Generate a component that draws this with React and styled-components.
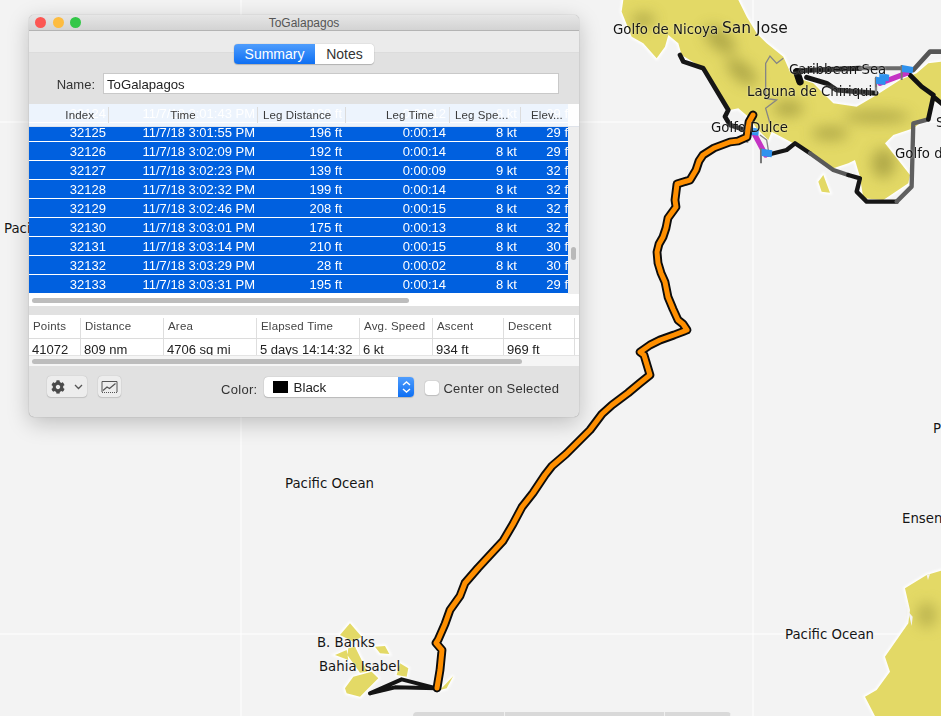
import React from 'react';
import styled, { createGlobalStyle } from 'styled-components';
import { FaCog } from 'react-icons/fa';

const GlobalStyle = createGlobalStyle`
    html, body {
        margin: 0;
        padding: 0;
        background: #f3f3f3;
    }
    * {
        box-sizing: border-box;
    }
`;

const Desktop = styled.div`
    position: relative;
    width: 941px;
    height: 716px;
    overflow: hidden;
    background: #f3f3f3;
    font-family: 'Liberation Sans', Arial, sans-serif;
`;

const MapCanvas = styled.svg`
    position: absolute;
    left: 0;
    top: 0;
`;

const MapLabel = styled.span`
    position: absolute;
    left: ${(p) => p.$x}px;
    top: ${(p) => p.$y}px;
    font-family: 'DejaVu Sans', sans-serif;
    font-size: ${(p) => p.$size || 13.3}px;
    line-height: 16px;
    white-space: nowrap;
    color: #151515;
    text-shadow: 0 0 2px rgba(255, 255, 255, 0.75);
`;

const BottomBar = styled.div`
    position: absolute;
    left: 413px;
    top: 712px;
    width: 318px;
    height: 4px;
    display: grid;
    grid-template-columns: 92px 160px 66px;
    border-radius: 5px 5px 0 0;
    overflow: hidden;
`;

const BottomBarPart = styled.div`
    background: #d9d9d9;
    border-right: 1px solid #f0f0f0;
`;

const Window = styled.div`
    position: absolute;
    left: 29px;
    top: 15px;
    width: 550px;
    height: 402px;
    display: flex;
    flex-direction: column;
    background: #e1e1e1;
    border-radius: 5px;
    overflow: hidden;
    box-shadow: 0 0 1px rgba(0, 0, 0, 0.45), 0 6px 22px rgba(0, 0, 0, 0.22);
`;

const TitleBar = styled.div`
    position: relative;
    flex: none;
    height: 16px;
    display: flex;
    align-items: center;
    justify-content: center;
    background: linear-gradient(#e6e6e6, #d3d3d3);
    border-bottom: 1px solid #b4b4b4;
    font-size: 12px;
    color: #555;
`;

const Lights = styled.div`
    position: absolute;
    left: 6px;
    top: 2px;
    display: flex;
    gap: 6.5px;
`;

const Light = styled.span`
    width: 11px;
    height: 11px;
    border-radius: 50%;
    background: ${(p) => p.$color};
`;

const TabStrip = styled.div`
    flex: none;
    height: 22px;
    background: #ebebeb;
    border-bottom: 1px solid #dcdcdc;
    display: flex;
    justify-content: center;
    padding-top: 13px;
    padding-left: 0;
`;

const Segments = styled.div`
    display: flex;
    width: 140px;
    height: 20px;
    border-radius: 4px;
    overflow: hidden;
    box-shadow: 0 0 1px rgba(0, 0, 0, 0.35), 0 1px 1px rgba(0, 0, 0, 0.18);
    position: relative;
    z-index: 1;
`;

const Segment = styled.div`
    width: ${(p) => p.$width}px;
    display: flex;
    align-items: center;
    justify-content: center;
    font-size: 14px;
    color: ${(p) => (p.$active ? '#fff' : '#333')};
    background: ${(p) => (p.$active ? 'linear-gradient(#4f9dfd, #0e6ff3)' : '#fff')};
`;

const NameRow = styled.div`
    flex: none;
    height: 51px;
    display: flex;
    align-items: flex-start;
    padding-top: 20px;
`;

const NameLabel = styled.label`
    width: 66px;
    line-height: 23px;
    text-align: right;
    font-size: 13px;
    color: #333;
`;

const NameField = styled.div`
    width: 456px;
    height: 21px;
    margin-left: 8px;
    padding-left: 3px;
    line-height: 21px;
    font-size: 13.2px;
    color: #222;
    background: #fff;
    border: 1px solid #c9c9c9;
`;

const TrackTable = styled.div`
    flex: none;
    height: 202px;
    display: flex;
    flex-direction: column;
    position: relative;
    background: #fff;
`;

const TrackBody = styled.div`
    flex: none;
    height: 190px;
    display: flex;
`;

const RowList = styled.div`
    width: 539px;
    overflow: hidden;
    background: #fff;
`;

const SideStrip = styled.div`
    position: relative;
    flex: 1;
    background: #eeeeee;
`;

const VerticalThumb = styled.div`
    position: absolute;
    left: 3px;
    top: 143px;
    width: 5px;
    height: 13px;
    border-radius: 3px;
    background: #b9b9b9;
`;

const columns = '80px 149px 88px 104px 71px 47px';

const Row = styled.div`
    display: grid;
    grid-template-columns: ${columns};
    height: 19px;
    padding-bottom: 1.5px;
    background-clip: content-box;
    background-color: #0060df;
    color: #fff;
    font-size: 13px;
    line-height: 20px;
    white-space: nowrap;
`;

const Cell = styled.div`
    height: 19px;
    text-align: right;
    padding-right: ${(p) => p.$pad}px;
    overflow: ${(p) => (p.$clip ? 'visible' : 'hidden')};
`;

const HeaderRow = styled.div`
    position: absolute;
    left: 0;
    top: 0;
    width: 100%;
    height: 23px;
    display: grid;
    grid-template-columns: ${columns} 11px;
    background: rgba(255, 255, 255, 0.93);
    border-bottom: 1px solid #dfe3ea;
    padding-top: 3px;
    padding-bottom: 3px;
`;

const HeaderCell = styled.div`
    font-size: 11.5px;
    line-height: 16px;
    letter-spacing: 0.1px;
    color: #3a3a3a;
    white-space: nowrap;
    text-align: ${(p) => p.$align || 'left'};
    padding: 0 ${(p) => p.$right || 0}px 0 ${(p) => p.$left || 0}px;
    border-right: 1px solid ${(p) => (p.$plain ? 'transparent' : '#dcdcdc')};
`;

const HorizontalTrack = styled.div`
    flex: 1;
    padding: ${(p) => p.$top}px 0 0 3px;
    background: ${(p) => p.$bg};
`;

const HorizontalThumb = styled.div`
    width: ${(p) => p.$width}px;
    height: ${(p) => p.$height}px;
    border-radius: 3px;
    background: #bdbdbd;
`;

const SummaryTable = styled.div`
    flex: none;
    height: 51px;
    margin-top: 9px;
    display: flex;
    flex-direction: column;
    background: #fff;
`;

const summaryColumns = '52px 83px 93px 103px 73px 71px 71px 4px';

const SummaryHead = styled.div`
    flex: none;
    height: 24px;
    display: grid;
    grid-template-columns: ${summaryColumns};
    padding-top: 3px;
    border-bottom: 1px solid #dcdcdc;
`;

const SummaryHeadCell = styled.div`
    font-size: 11.5px;
    line-height: 17px;
    letter-spacing: 0.2px;
    padding-left: 4px;
    color: #444;
    white-space: nowrap;
    border-right: 1px solid #dedede;
`;

const SummaryValues = styled.div`
    flex: none;
    height: 16px;
    display: grid;
    grid-template-columns: ${summaryColumns};
    overflow: hidden;
`;

const SummaryValue = styled.div`
    font-size: 13px;
    line-height: 21px;
    padding-left: 3px;
    color: #222;
    white-space: nowrap;
    border-right: 1px solid #dedede;
`;

const SummaryScroll = styled.div`
    flex: none;
    height: 11px;
    padding: 3px 0 0 3px;
    background: #f5f5f5;
    border-top: 1px solid #e4e4e4;
`;

const Footer = styled.div`
    flex: 1;
    display: flex;
    align-items: flex-start;
    padding: 10px 0 0 18px;
`;

const ToolButton = styled.button`
    width: ${(p) => p.$width}px;
    height: 21px;
    margin-right: ${(p) => p.$gap || 0}px;
    padding: 0;
    display: flex;
    align-items: center;
    justify-content: center;
    gap: 9px;
    color: #444;
    background: #ededed;
    border: none;
    border-radius: 4px;
    box-shadow: 0 0 1px rgba(0, 0, 0, 0.25), 0 1px 1px rgba(0, 0, 0, 0.12);
`;

const ColorLabel = styled.span`
    margin-left: 100px;
    line-height: 28px;
    font-size: 13px;
    letter-spacing: 0.3px;
    color: #333;
`;

const SelectBox = styled.div`
    width: 150px;
    height: 20px;
    margin: 1px 0 0 7px;
    display: flex;
    align-items: center;
    padding-left: 9px;
    background: #fff;
    border-radius: 4px;
    overflow: hidden;
    box-shadow: 0 0 1px rgba(0, 0, 0, 0.35), 0 1px 1px rgba(0, 0, 0, 0.15);
    font-size: 13.4px;
    color: #222;
`;

const Swatch = styled.span`
    width: 15px;
    height: 12px;
    margin-right: 5px;
    background: #000;
`;

const SelectName = styled.span`
    flex: 1;
`;

const Stepper = styled.span`
    width: 16px;
    height: 100%;
    display: flex;
    align-items: center;
    justify-content: center;
    background: linear-gradient(#4f9dfd, #0e6ff3);
`;

const CheckBox = styled.span`
    width: 14px;
    height: 14px;
    margin: 5px 0 0 11px;
    background: #fff;
    border-radius: 3px;
    box-shadow: 0 0 1px rgba(0, 0, 0, 0.45), 0 1px 1px rgba(0, 0, 0, 0.12);
`;

const CheckLabel = styled.span`
    margin-left: 4px;
    line-height: 25px;
    font-size: 13px;
    letter-spacing: 0.24px;
    color: #333;
`;

const rows = [
    ['32124', '11/7/18 3:01:43 PM', '198 ft', '0:00:12', '8 kt', '29 ft'],
    ['32125', '11/7/18 3:01:55 PM', '196 ft', '0:00:14', '8 kt', '29 ft'],
    ['32126', '11/7/18 3:02:09 PM', '192 ft', '0:00:14', '8 kt', '29 ft'],
    ['32127', '11/7/18 3:02:23 PM', '139 ft', '0:00:09', '9 kt', '32 ft'],
    ['32128', '11/7/18 3:02:32 PM', '199 ft', '0:00:14', '8 kt', '32 ft'],
    ['32129', '11/7/18 3:02:46 PM', '208 ft', '0:00:15', '8 kt', '32 ft'],
    ['32130', '11/7/18 3:03:01 PM', '175 ft', '0:00:13', '8 kt', '32 ft'],
    ['32131', '11/7/18 3:03:14 PM', '210 ft', '0:00:15', '8 kt', '30 ft'],
    ['32132', '11/7/18 3:03:29 PM', '28 ft', '0:00:02', '8 kt', '30 ft'],
    ['32133', '11/7/18 3:03:31 PM', '195 ft', '0:00:14', '8 kt', '29 ft'],
];

const cellPads = [3, 3, 4, 4, 4, 0];

const summary = [
    ['Points', '41072'],
    ['Distance', '809 nm'],
    ['Area', '4706 sq mi'],
    ['Elapsed Time', '5 days 14:14:32'],
    ['Avg. Speed', '6 kt'],
    ['Ascent', '934 ft'],
    ['Descent', '969 ft'],
];

const labels = [
    ['Golfo de Nicoya', 613, 22],
    ['San Jose', 722, 20, 15.5],
    ['Caribbean Sea', 789, 62],
    ['Laguna de Chiriqui', 747, 84],
    ['Golfo Dulce', 711, 120],
    ['Golfo d', 895, 146],
    ['S', 936, 115],
    ['Paci', 4, 221],
    ['P', 933, 421],
    ['Ensen', 902, 511],
    ['Pacific Ocean', 285, 476],
    ['Pacific Ocean', 785, 627],
    ['B. Banks', 317, 635],
    ['Bahia Isabel', 319, 659],
];

const LAND =
    'M70 0L65 35L95 110L130 130L170 175L195 140L205 105L235 130L245 165L310 205L345 260L390 330L415 325L445 350L470 385L505 420L515 395L580 430L635 460L700 505L745 490L765 480L780 530L790 595L850 600L925 550L930 525L855 430L880 405L940 385L980 355L995 300L1023 312L1023 185L985 190L950 220L900 240L830 285L770 320L700 310L660 270L640 250L610 240L570 215L550 170L500 130L470 100L440 50L415 0Z M655 545L670 525L690 578L665 575Z';
const SOUTH_LAND = 'M483 212L440 225L375 265L390 330L385 370L315 470L330 515L290 570L255 590L285 648L483 648Z';
const ISLANDS =
    'M180 70L215 110L190 125L150 105Z M175 145L195 140L232 215L210 218L172 165Z M135 165L170 150L175 180Z M255 140L285 138L298 162L270 160Z M330 190L355 205L350 230L320 225Z M165 265L190 230L245 215L265 235L235 265L210 290L170 280Z M450 270L490 228L470 265Z';
const ORANGE =
    'M753 115L749 122L748 129L747 137L738 141L730 142L714 148L703 155L699 161L696 170L690 180L677 184L676 192L675 200L676 207L668 218L666 228L663 237L659 244L657 252L658 263L661 273L665 282L668 297L673 309L678 320L683 324L687 330L674 335L660 340L650 345L640 352L644 355L647 365L650 375L640 383L628 393L612 405L602 414L590 430L578 442L566 454L552 466L545 475L533 493L522 507L513 524L503 541L490 555L478 568L465 583L460 596L450 610L445 624L438 640L436 643L442 650L440 670L437 688';

// map drawing: land, tracks and flags
const MapDrawing = () => (
    <MapCanvas width="941" height="716" viewBox="0 0 941 716">
        <defs>
            <filter id="halo" x="-20%" y="-20%" width="140%" height="140%">
                <feGaussianBlur stdDeviation="3" />
            </filter>
            <filter id="soft" x="-50%" y="-50%" width="200%" height="200%">
                <feGaussianBlur stdDeviation="20" />
            </filter>
            <clipPath id="landClip">
                <path d={LAND} />
            </clipPath>
        </defs>
        <path d="M241 0V716M753 0V716M0 122H941M0 634H941" stroke="#fff" strokeWidth="1" fill="none" />
        <g transform="translate(600 0) scale(0.3333)">
            <path d={LAND} fill="#fff" stroke="#fff" strokeWidth="10" filter="url(#halo)" />
            <path d={LAND} fill="#e3d966" />
            <g clipPath="url(#landClip)">
                <g fill="#a39c40" opacity="0.8" filter="url(#soft)">
                    <ellipse cx="360" cy="120" rx="55" ry="28" transform="rotate(40 360 120)" />
                    <ellipse cx="425" cy="215" rx="55" ry="26" transform="rotate(40 425 215)" />
                    <ellipse cx="565" cy="325" rx="45" ry="24" />
                    <ellipse cx="830" cy="350" rx="100" ry="18" />
                    <ellipse cx="850" cy="490" rx="35" ry="45" />
                    <ellipse cx="130" cy="60" rx="35" ry="20" />
                    <ellipse cx="690" cy="400" rx="55" ry="20" />
                </g>
            </g>
            <path d="M550 175L530 190L510 168L497 190V295L530 300L497 325L510 370M480 405L500 420L505 450" fill="none" stroke="#858585" strokeWidth="4" />
            <g fill="none" strokeLinejoin="round" strokeLinecap="round">
                <path d="M240 165L250 185L310 205L385 330L375 350L390 375L440 392" stroke="#161616" strokeWidth="14" />
                <path d="M500 465L560 450L585 430L630 460" stroke="#161616" strokeWidth="13" />
                <path d="M630 460L700 510L745 525" stroke="#5a5a5a" strokeWidth="13" />
                <path d="M745 525L780 535L770 575L800 605L890 605" stroke="#161616" strokeWidth="13" />
                <path d="M890 605L935 560L940 370L985 358" stroke="#5f5f5f" strokeWidth="13" />
                <path d="M985 358L1000 290L1030 315M930 225L965 260L1000 285" stroke="#111" strokeWidth="14" />
                <path d="M940 210L990 155L1030 155" stroke="#555" strokeWidth="14" />
                <path d="M590 212L780 205" stroke="#0c0c0c" strokeWidth="15" />
                <path d="M780 205H905" stroke="#6a6a6a" strokeWidth="12" />
                <path d="M600 245L590 215" stroke="#0c0c0c" strokeWidth="22" />
                <path d="M620 232L680 250L710 270L828 280" stroke="#161616" strokeWidth="15" />
                <path d="M828 235V280" stroke="#8a8a8a" strokeWidth="7" />
                <path d="M462 400L497 465M840 250L920 220" stroke="#c434c4" strokeWidth="16" />
            </g>
            <g stroke="#777" strokeWidth="6">
                <path d="M442 382V428M483 445V490M828 230V262M852 222V240M905 195V240" />
            </g>
            <g fill="#2f92ee">
                <path d="M444 381L477 386L475 407L444 403Z" />
                <path d="M485 446L517 451L515 472L485 468Z" />
                <path d="M838 218L868 224L866 244L838 240Z" />
                <path d="M828 230L858 235L856 255L828 251Z" />
                <path d="M906 195L940 201L938 220L906 216Z" />
            </g>
        </g>
        <g transform="translate(780 500) scale(0.3333)">
            <path d={SOUTH_LAND} fill="#fff" stroke="#fff" strokeWidth="10" filter="url(#halo)" />
            <path d={SOUTH_LAND} fill="#e3d966" />
            <ellipse cx="440" cy="345" rx="30" ry="38" fill="#a39c40" opacity="0.6" filter="url(#soft)" />
            <path d="M440 225L444 240L450 222Z M385 335L395 378L398 350Z" fill="#f3f3f3" />
        </g>
        <g transform="translate(290 600) scale(0.3333)">
            <path d={ISLANDS} fill="#fff" stroke="#fff" strokeWidth="10" filter="url(#halo)" />
            <path d={ISLANDS} fill="#e3d966" />
            <path d="M240 280L335 238L440 265L315 262L240 280" fill="none" stroke="#141414" strokeWidth="12" strokeLinejoin="round" strokeLinecap="round" />
        </g>
        <g fill="none" strokeLinejoin="round" strokeLinecap="round">
            <path d={ORANGE} stroke="#0c0c0c" strokeWidth="8.8" />
            <path d={ORANGE} stroke="#ff8f00" strokeWidth="5" />
        </g>
    </MapCanvas>
);

const App = () => {
    return (
        <Desktop>
            <GlobalStyle />
            <MapDrawing />
            {labels.map(([text, x, y, size]) => (
                <MapLabel key={text + x} $x={x} $y={y} $size={size}>
                    {text}
                </MapLabel>
            ))}
            <BottomBar>
                <BottomBarPart />
                <BottomBarPart />
                <BottomBarPart />
            </BottomBar>

            <Window>
                <TitleBar>
                    <Lights>
                        <Light $color="#fc5753" />
                        <Light $color="#fdbc40" />
                        <Light $color="#33c748" />
                    </Lights>
                    ToGalapagos
                </TitleBar>
                <TabStrip>
                    <Segments>
                        <Segment $active $width={81}>
                            Summary
                        </Segment>
                        <Segment $width={59}>Notes</Segment>
                    </Segments>
                </TabStrip>
                <NameRow>
                    <NameLabel>Name:</NameLabel>
                    <NameField>ToGalapagos</NameField>
                </NameRow>

                <TrackTable>
                    <TrackBody>
                        <RowList>
                            {rows.map((row) => (
                                <Row key={row[0]}>
                                    {row.map((value, i) => (
                                        <Cell key={i} $pad={cellPads[i]} $clip={i === 5}>
                                            {i === 5 ? value.replace(' ft', ' f') : value}
                                        </Cell>
                                    ))}
                                </Row>
                            ))}
                        </RowList>
                        <SideStrip>
                            <VerticalThumb />
                        </SideStrip>
                    </TrackBody>
                    <HorizontalTrack $top={4} $bg="#fff">
                        <HorizontalThumb $width={377} $height={5} />
                    </HorizontalTrack>
                    <HeaderRow>
                        <HeaderCell $align="right" $right={14}>
                            Index
                        </HeaderCell>
                        <HeaderCell $align="center">Time</HeaderCell>
                        <HeaderCell $left={5}>Leg Distance</HeaderCell>
                        <HeaderCell $align="right" $right={15}>
                            Leg Time
                        </HeaderCell>
                        <HeaderCell $left={5}>Leg Spe...</HeaderCell>
                        <HeaderCell $left={10} $plain>
                            Elev...
                        </HeaderCell>
                    </HeaderRow>
                </TrackTable>

                <SummaryTable>
                    <SummaryHead>
                        {summary.map(([title]) => (
                            <SummaryHeadCell key={title}>{title}</SummaryHeadCell>
                        ))}
                    </SummaryHead>
                    <SummaryValues>
                        {summary.map(([title, value]) => (
                            <SummaryValue key={title}>{value}</SummaryValue>
                        ))}
                    </SummaryValues>
                    <SummaryScroll>
                        <HorizontalThumb $width={490} $height={5} />
                    </SummaryScroll>
                </SummaryTable>

                <Footer>
                    <ToolButton $width={40} $gap={11}>
                        <FaCog size={14} color="#4a4a4a" />
                        <svg width="9" height="6" viewBox="0 0 9 6" fill="none" stroke="#555" strokeWidth="1.3">
                            <path d="M1 1l3.5 3.5L8 1" />
                        </svg>
                    </ToolButton>
                    <ToolButton $width={23}>
                        <svg width="17" height="14" viewBox="0 0 17 14" fill="none" stroke="#555" strokeWidth="1">
                            <path d="M1 12V1.5H16V12" />
                            <path d="M1 12.5H16" strokeDasharray="1 1" />
                            <path d="M2 10.5L6 7L8.5 8.5L14.5 3.5" strokeWidth="1.2" />
                        </svg>
                    </ToolButton>
                    <ColorLabel>Color:</ColorLabel>
                    <SelectBox>
                        <Swatch />
                        <SelectName>Black</SelectName>
                        <Stepper>
                            <svg width="9" height="14" viewBox="0 0 9 14" fill="none" stroke="#fff" strokeWidth="1.4">
                                <path d="M1 5L4.5 2L8 5M1 9L4.5 12L8 9" />
                            </svg>
                        </Stepper>
                    </SelectBox>
                    <CheckBox />
                    <CheckLabel>Center on Selected</CheckLabel>
                </Footer>
            </Window>
        </Desktop>
    );
};

export default App;
